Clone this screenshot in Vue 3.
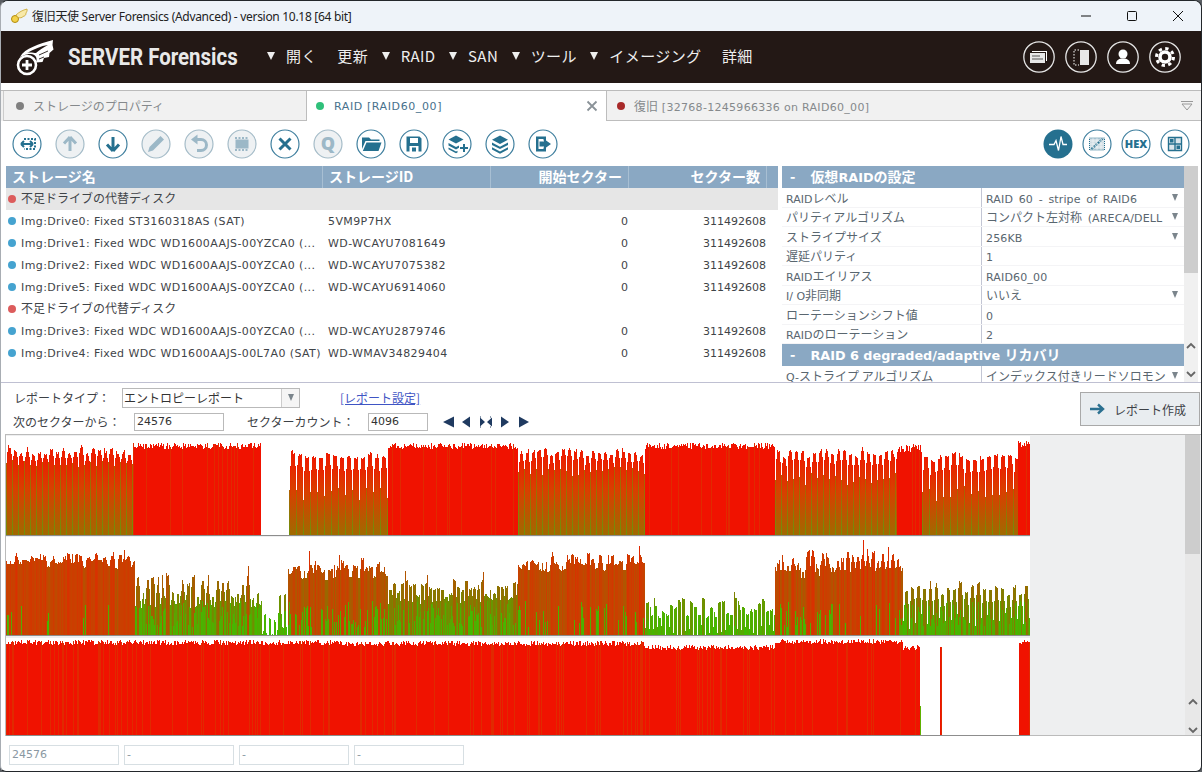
<script setup>
const menu = [
  { label: "開く", arrow: true },
  { label: "更新" },
  { label: "RAID", arrow: true },
  { label: "SAN", arrow: true },
  { label: "ツール", arrow: true },
  { label: "イメージング", arrow: true },
  { label: "詳細" },
];

const drives = [
  { group: true, shade: true, name: "不足ドライブの代替ディスク" },
  { name: "Img:Drive0: Fixed ST3160318AS (SAT)", id: "5VM9P7HX" },
  { name: "Img:Drive1: Fixed WDC WD1600AAJS-00YZCA0 (...", id: "WD-WCAYU7081649" },
  { name: "Img:Drive2: Fixed WDC WD1600AAJS-00YZCA0 (...", id: "WD-WCAYU7075382" },
  { name: "Img:Drive5: Fixed WDC WD1600AAJS-00YZCA0 (...", id: "WD-WCAYU6914060" },
  { group: true, name: "不足ドライブの代替ディスク" },
  { name: "Img:Drive3: Fixed WDC WD1600AAJS-00YZCA0 (...", id: "WD-WCAYU2879746" },
  { name: "Img:Drive4: Fixed WDC WD1600AAJS-00L7A0 (SAT)", id: "WD-WMAV34829404" },
];

const raidProps = [
  { k: "RAIDレベル", v: "RAID 60 - stripe of RAID6", pick: true },
  { k: "パリティアルゴリズム", v: "コンパクト左対称 (ARECA/DELL", pick: true },
  { k: "ストライプサイズ", v: "256KB", pick: true },
  { k: "遅延パリティ", v: "1" },
  { k: "RAIDエイリアス", v: "RAID60_00" },
  { k: "I/ O非同期", v: "いいえ", pick: true },
  { k: "ローテーションシフト値", v: "0" },
  { k: "RAIDのローテーション", v: "2" },
];

// the app sets latin at 11px and kana/kanji at 12px, so strings get split in runs
function runs(s) {
  return s
    .split(/([\x20-\x7e]+)/)
    .filter(Boolean)
    .map((t) => ({ t, latin: /^[\x20-\x7e]/.test(t) }));
}

// toolbar icons: fill = solid shapes, line = stroked shapes
const leftTools = [
  { line: "M9 15h11M9 15l3-3M9 15l3 3M21 15l-3-3M21 15l-3 3", dash: "M12 10h11v10H12", thin: true },
  { off: true, line: "M15 8l6 6.5M15 8l-6 6.5M15 8v14" },
  { line: "M15 22l6-6.5M15 22l-6-6.5M15 22V8" },
  { off: true, fill: "M19.5 7l3.5 3.5L12 21.5l-5 1.5 1.500-5z" },
  { off: true, line: "M12 10.500h5a5.500 5.500 0 0 1 0 11h-4", fill: "M7 10.500l6.500-5v10z" },
  { off: true, fill: "M8.500 10.500h13v9h-13z", dash: "M8 9h14M8 21h14" },
  { line: "M9.500 9.500l11 11M20.500 9.500l-11 11" },
  { off: true, text: "Q", size: 18 },
  { fill: "M6 8.500h7l2 2h8.500V12H9.500L6 20zM10.500 13.500H25.500L22.500 22H6.800z" },
  { fill: "M7.500 7.500h13l2 2v13h-15zM11 9v5h8V9zM10.500 17v5.500h9V17zM13 18.500h4v4h-4z", evenodd: true },
  { fill: "M14 6.500l7.500 4-7.500 4-7.500-4zM6.500 14l7.500 4 3-1.600v2.300L14 20.500l-7.500-4zM6.500 18.500l7.500 4 1.500-.8v1.800l-1.500.8-7.500-4zM21 15h2v3h3v2h-3v3h-2v-3h-3v-2h3z" },
  { fill: "M15 6.500l8 4.200-8 4.200-8-4.200zM7 13.500l8 4.200 8-4.200v2.400l-8 4.200-8-4.200zM7 18.200l8 4.200 8-4.200v2.400l-8 4.200-8-4.200z" },
  { fill: "M8 7.500h10v4h-2.500V10H10.500v10h5v-1.500H18v4H8zM16 12.500v-2.500l7 5-7 5v-2.500h-4.500v-5z" },
];

// scratch generator so the charts look the same on every load
let seed = 7741;
function rnd() {
  seed = (seed * 16807) % 2147483647;
  return seed / 2147483647;
}

function mix(a, b, t) {
  const c = a.map((v, i) => Math.round(v + (b[i] - v) * t));
  return `rgb(${c[0]},${c[1]},${c[2]})`;
}

function heatColor(ratio) {
  const stops = [
    [0.08, [55, 195, 0]],
    [0.28, [85, 170, 0]],
    [0.45, [135, 120, 0]],
    [0.7, [195, 70, 0]],
    [1, [235, 30, 0]],
  ];
  for (let i = 1; i < stops.length; i++) {
    if (ratio <= stops[i][0]) {
      const t = Math.max(0, (ratio - stops[i - 1][0]) / (stops[i][0] - stops[i - 1][0]));
      return mix(stops[i - 1][1], stops[i][1], t);
    }
  }
  return "rgb(235,30,0)";
}

// each segment: from, to, top, jitter, mode, period, valley depth
function buildLane(offset, segs) {
  const bars = [];
  for (const [from, to, top, jit, mode, period, valley] of segs) {
    let peak = top;
    for (let x = from; x < to; x++) {
      const phase = period ? (x - from) % period : 1;
      if (period && phase === 0) peak = top + rnd() * jit;
      let y = period ? peak + rnd() * 2.5 : top + rnd() * jit;
      if (period && rnd() < 0.1) y -= rnd() * jit * 0.6;
      if (period && phase === 0) y = top + valley * (0.65 + rnd() * 0.35);
      else if (period && period > 4 && (phase === 1 || phase === period - 1)) y += valley * 0.25;
      const h = Math.max(0, 99 - y);
      let fill;
      if (mode === "red") fill = rnd() < 0.12 ? "#e02a00" : "#f01200";
      else if (mode === "fade") fill = phase === 0 ? "url(#fadeLow)" : "url(#fadeHigh)";
      else fill = heatColor((h / 100) * (0.92 + rnd() * 0.16));
      bars.push({ x: x - 6, y: offset + y, h, fill });
      // low entropy sectors leave a green foot under the weaker columns
      if (mode === "heat" && h < 72 && rnd() < 0.5) {
        const foot = Math.min(h, 8 + rnd() * 26);
        bars.push({ x: x - 6, y: offset + 99 - foot, h: foot, fill: heatColor(0.16 + rnd() * 0.14) });
      }
    }
  }
  return bars;
}

const bars = [
  ...buildLane(0, [
    [6, 133, 10, 8, "fade", 6, 22],
    [133, 261, 7, 6, "red"],
    [289, 388, 16, 6, "fade", 7, 50],
    [388, 518, 7, 6, "red"],
    [518, 645, 11, 8, "fade", 6, 30],
    [645, 775, 7, 6, "red"],
    [775, 897, 13, 8, "fade", 6, 36],
    [897, 922, 8, 8, "red"],
    [922, 1018, 16, 8, "fade", 7, 50],
    [1018, 1030, 5, 6, "red"],
  ]),
  ...buildLane(100, [
    [6, 135, 16, 16, "heat", 4, 10],
    [135, 262, 38, 24, "heat", 5, 34],
    [262, 288, 45, 40, "heat", 5, 70],
    [288, 388, 20, 24, "heat", 4, 16],
    [388, 518, 42, 20, "heat", 4, 26],
    [518, 645, 16, 18, "heat", 4, 14],
    [645, 775, 60, 20, "heat", 4, 44],
    [775, 903, 12, 22, "heat", 5, 24],
    [903, 1030, 44, 14, "heat", 6, 50],
  ]),
  ...buildLane(200, [
    [6, 345, 4, 5, "red"],
    [345, 645, 5, 5, "red"],
    [645, 775, 9, 5, "red"],
    [775, 903, 3, 5, "red"],
    [903, 920, 7, 4, "red", 6, 8],
    [940, 942, 11, 2, "red"],
    [1019, 1030, 4, 4, "red"],
  ]),
  { x: 914, y: 270, h: 29, fill: "#5fb000" },
];
</script>

<template>
  <div class="window">
    <div class="titlebar">
      <svg class="app-icon" width="18" height="16" viewBox="0 0 18 16">
        <circle cx="5" cy="11" r="3.500" fill="#f3d24a" stroke="#b08a10" stroke-width="1" />
        <path d="M6 7C9 4 13 2 17 1c.5 2-.5 3-1 4 0 2-1 3-3 3.500-1 1.500-3 1.500-5 1z" fill="#f8e9a8" stroke="#c9a52a" stroke-width=".8" />
      </svg>
      <span class="title">復旧天使 Server Forensics (Advanced) - version 10.18 [64 bit]</span>
      <div class="win-buttons">
        <svg width="12" height="12" viewBox="0 0 12 12"><path d="M1 6h10" stroke="#111" stroke-width="1" /></svg>
        <svg width="12" height="12" viewBox="0 0 12 12"><rect x="1.500" y="1.500" width="9" height="9" rx="1" fill="none" stroke="#111" /></svg>
        <svg width="12" height="12" viewBox="0 0 12 12"><path d="M1 1l10 10M11 1L1 11" stroke="#111" /></svg>
      </div>
    </div>

    <header class="brandbar">
      <svg class="logo" width="42" height="40" viewBox="0 0 42 40">
        <circle cx="12" cy="28" r="9" fill="none" stroke="#fff" stroke-width="2.600" />
        <path d="M12 23v10M7 28h10" stroke="#fff" stroke-width="2.800" />
        <path d="M5 20C10 11 24 7 38 3l-.5 5 1 4.500-4 3.500-.5 4-5 1-1.500 4-6.500 .5c2-5-1-8-5-8.500-3 0-6 .5-8.500 2z" fill="#fff" />
        <path d="M12 16c7-4 14-7 21-8-5 3-9 5-12 8-2 0-6-1-9 0z" fill="#231815" />
        <path d="M24 18l9-4M24 22l5-2" stroke="#231815" stroke-width=".9" fill="none" />
      </svg>
      <span class="brand"><span class="brand-text">SERVER Forensics</span></span>
      <nav class="menu">
        <span v-for="item in menu" :key="item.label" class="menu-item" :class="{ plain: !item.arrow }">
          <i v-if="item.arrow" class="menu-arrow"></i>{{ item.label }}
        </span>
      </nav>
      <div class="head-icons">
        <svg width="32" height="32" viewBox="0 0 32 32">
          <circle cx="16" cy="16" r="15.200" class="ring" />
          <path d="M9 10h15v10h-1V11H9z" fill="#fff" />
          <path d="M7 12h15v10H7z" fill="#e8e8e8" />
          <path d="M9 15h8M9 18h11" stroke="#555" stroke-width="1.200" />
        </svg>
        <svg width="32" height="32" viewBox="0 0 32 32">
          <circle cx="16" cy="16" r="15.200" class="ring" />
          <path d="M15 9h9v15h-9z" fill="#e8e8e8" />
          <path d="M14 9H9v15h5" fill="none" stroke="#fff" stroke-dasharray="1.500 1.500" />
        </svg>
        <svg width="32" height="32" viewBox="0 0 32 32">
          <circle cx="16" cy="16" r="15.200" class="ring" />
          <circle cx="16" cy="13" r="4.500" fill="#fff" />
          <path d="M9 23c0-4 3-5 5-5.500h4c2 .5 5 1.500 5 5.500z" fill="#fff" />
        </svg>
        <svg width="32" height="32" viewBox="0 0 32 32">
          <circle cx="16" cy="16" r="15.200" class="ring" />
          <circle cx="16" cy="16" r="8.500" fill="none" stroke="#fff" stroke-width="3" stroke-dasharray="3.300 3.370" />
          <circle cx="16" cy="16" r="5" fill="none" stroke="#fff" stroke-width="3.600" />
        </svg>
      </div>
    </header>

    <div class="tabs">
      <div class="tab tab-first"><i class="dot grey"></i>ストレージのプロパティ</div>
      <div class="tab tab-active">
        <i class="dot green"></i><span class="latin">RAID [RAID60_00]</span>
        <svg class="tab-close" width="12" height="12" viewBox="0 0 12 12"><path d="M1.500 1.500l9 9M10.500 1.500l-9 9" stroke="#8a9298" stroke-width="1.800" /></svg>
      </div>
      <div class="tab tab-last">
        <i class="dot maroon"></i><span>復旧<span class="latin"> [32768-1245966336 on RAID60_00]</span></span>
        <svg class="tab-menu" width="12" height="10" viewBox="0 0 12 10"><path d="M0 .5h12" stroke="#999" /><path d="M1 3h10L6 9z" fill="none" stroke="#999" /></svg>
      </div>
    </div>

    <div class="toolbar">
      <div class="tool-group">
        <svg v-for="(t, i) in leftTools" :key="i" class="tool" :class="{ off: t.off }" width="30" height="30" viewBox="0 0 30 30">
          <circle cx="15" cy="15" r="14" class="tool-ring" />
          <path v-if="t.fill" :d="t.fill" class="tool-fill" :fill-rule="t.evenodd ? 'evenodd' : 'nonzero'" />
          <path v-if="t.line" :d="t.line" class="tool-line" :class="{ thin: t.thin }" />
          <path v-if="t.dash" :d="t.dash" class="tool-dash" />
          <text v-if="t.text" x="15" y="21" text-anchor="middle" class="tool-text" :font-size="t.size">{{ t.text }}</text>
        </svg>
      </div>
      <div class="tool-group right">
        <svg class="tool" width="30" height="30" viewBox="0 0 30 30">
          <circle cx="15" cy="15" r="14.500" fill="#25708f" />
          <path d="M6 15.500h5l2-4 2.500 10 2.500-14 2 8h4" fill="none" stroke="#fff" stroke-width="1.300" />
        </svg>
        <svg class="tool" width="30" height="30" viewBox="0 0 30 30">
          <circle cx="15" cy="15" r="14" class="tool-ring" />
          <path d="M7.500 9h15v12h-15z" fill="#cfdde4" stroke="#25708f" stroke-dasharray="1 1" />
          <path d="M9.500 20l11-10" fill="none" stroke="#25708f" stroke-width="2.400" stroke-dasharray="2 .8" />
          <path d="M8 12h14M8 15h14M8 18h14M11 9v12M15 9v12M19 9v12" stroke="#fff" stroke-width=".5" />
        </svg>
        <svg class="tool" width="30" height="30" viewBox="0 0 30 30">
          <circle cx="15" cy="15" r="14" class="tool-ring" />
          <text x="15" y="19" text-anchor="middle" class="tool-text" font-size="11">HEX</text>
        </svg>
        <svg class="tool" width="30" height="30" viewBox="0 0 30 30">
          <circle cx="15" cy="15" r="14" class="tool-ring" />
          <path d="M8.500 8.500h13v13h-13zM15 8.500v13M8.500 15h13" fill="#dce6eb" stroke="#25708f" stroke-width="1.400" />
          <path d="M10 10h3.500v3.500H10zM16.500 16.500H20V20h-3.500z" fill="#25708f" />
        </svg>
      </div>
    </div>

    <section class="upper">
      <div class="drives">
        <div class="row head">
          <span>ストレージ名</span>
          <span>ストレージID</span>
          <span class="num">開始セクター</span>
          <span class="num">セクター数</span>
        </div>
        <div v-for="(d, i) in drives" :key="i" class="row" :class="{ shade: d.shade }">
          <span class="name"><i class="dot small" :class="d.group ? 'coral' : 'sky'"></i><span :class="d.group ? 'group-name' : 'latin wide-text'">{{ d.name }}</span></span>
          <template v-if="!d.group">
            <span class="latin wide-text">{{ d.id }}</span>
            <span class="num latin">0</span>
            <span class="num latin">311492608</span>
          </template>
        </div>
      </div>

      <div class="props">
        <div class="props-body">
          <div class="prop-title"><b class="minus">-</b>仮想<span class="latin">RAID</span>の設定</div>
          <div v-for="p in raidProps" :key="p.k" class="prop">
            <span class="prop-key"><span><span v-for="(r, i) in runs(p.k)" :key="i" :class="{ latin: r.latin }">{{ r.t }}</span></span></span>
            <span class="prop-val"><span><span v-for="(r, i) in runs(p.v)" :key="i" :class="{ latin: r.latin }">{{ r.t }}</span></span><i v-if="p.pick" class="caret"></i></span>
          </div>
          <div class="prop-title"><b class="minus">-</b><span class="latin">RAID 6 degraded/adaptive </span>リカバリ</div>
          <div class="prop last">
            <span class="prop-key"><span><span class="latin">Q-</span>ストライプ アルゴリズム</span></span>
            <span class="prop-val"><span>インデックス付きリードソロモン</span><i class="caret"></i></span>
          </div>
        </div>
        <div class="scroll">
          <div class="thumb"></div>
          <svg class="chev" width="10" height="8" viewBox="0 0 10 8"><path d="M1 6l4-4 4 4" fill="none" stroke="#666" stroke-width="1.800" /></svg>
          <svg class="chev" width="10" height="8" viewBox="0 0 10 8"><path d="M1 2l4 4 4-4" fill="none" stroke="#666" stroke-width="1.800" /></svg>
        </div>
      </div>
    </section>

    <section class="report">
      <div class="report-form">
        <div class="form-row">
          <span class="type-label">レポートタイプ：</span>
          <div class="select">
            <span>エントロピーレポート</span>
            <div class="select-btn"><i class="caret"></i></div>
          </div>
          <a class="link">[レポート設定]</a>
        </div>
        <div class="form-row">
          <span class="from-label">次のセクターから：</span>
          <div class="field wide latin">24576</div>
          <span class="count-label">セクターカウント：</span>
          <div class="field narrow latin">4096</div>
          <svg class="nav" width="88" height="12" viewBox="0 0 88 12">
            <path d="M1 6l11-5.500v11zM20 6l8-5.500v11zM59 .5l8 5.500-8 5.500zM77 .5l10 5.500-10 5.500z" fill="#1f3a60" />
            <path d="M38 1.500l5 4.500-5 4.500zM50 1.500l-5 4.500 5 4.500z" fill="#1f3a60" />
            <path d="M38 1h2M38 11h2M48 1h2M48 11h2" stroke="#1f3a60" stroke-dasharray="1 1" />
          </svg>
        </div>
      </div>
      <button class="make">
        <svg width="16" height="12" viewBox="0 0 16 12"><path d="M1 6h12M9 1.500L14 6l-5 4.500" fill="none" stroke="#2b7090" stroke-width="2.400" /></svg>
        レポート作成
      </button>
    </section>

    <section class="chart">
      <svg class="plot" width="1024" height="300" viewBox="0 0 1024 300" shape-rendering="crispEdges">
        <defs>
          <linearGradient id="fadeHigh" x1="0" y1="0" x2="0" y2="1">
            <stop offset="0" stop-color="#ee1a00" />
            <stop offset=".45" stop-color="#d84000" />
            <stop offset="1" stop-color="#a06a00" />
          </linearGradient>
          <linearGradient id="fadeLow" x1="0" y1="0" x2="0" y2="1">
            <stop offset="0" stop-color="#b06000" />
            <stop offset="1" stop-color="#70900a" />
          </linearGradient>
        </defs>
        <rect width="1024" height="99" fill="#fff" />
        <rect y="101" width="1024" height="98" fill="#fff" />
        <rect y="202" width="1024" height="97" fill="#fff" />
        <rect v-for="(b, i) in bars" :key="i" :x="b.x" :y="b.y" width="1" :height="b.h" :fill="b.fill" />
        <rect y="99" width="1024" height="1" fill="#8d8d8d" />
        <rect y="199" width="1024" height="1" fill="#8d8d8d" />
        <rect y="299" width="1024" height="1" fill="#8d8d8d" />
      </svg>
      <div class="chart-scroll">
        <div class="chart-thumb"></div>
        <svg class="chev" width="10" height="8" viewBox="0 0 10 8"><path d="M1 6l4-4 4 4" fill="none" stroke="#666" stroke-width="1.800" /></svg>
        <svg class="chev" width="10" height="8" viewBox="0 0 10 8"><path d="M1 2l4 4 4-4" fill="none" stroke="#666" stroke-width="1.800" /></svg>
      </div>
    </section>

    <footer class="status">
      <div class="status-box first latin">24576</div>
      <div class="status-box latin">-</div>
      <div class="status-box latin">-</div>
      <div class="status-box latin">-</div>
    </footer>
  </div>
</template>

<style scoped>
.window {
  width: 1202px;
  height: 772px;
  box-sizing: border-box;
  display: flex;
  flex-direction: column;
  overflow: hidden;
  background: #fff;
  border: 1px solid #23272b;
  border-left-color: #a8adb3;
  border-top-left-radius: 8px;
  border-top-right-radius: 8px;
  border-bottom-left-radius: 6px;
  border-bottom-right-radius: 6px;
  font-family: "Noto Sans CJK JP", "Noto Sans", sans-serif;
  font-size: 12px;
  color: #3c4146;
}
.latin {
  font-family: "DejaVu Sans", sans-serif;
  font-size: 11px;
  white-space: pre;
}
.wide-text {
  letter-spacing: 0.4px;
}

.titlebar {
  height: 30px;
  flex: none;
  display: flex;
  align-items: center;
  background: #eef3f9;
  padding-left: 9px;
}
.app-icon {
  margin-right: 4px;
}
.title {
  font-family: "Noto Sans", "Noto Sans CJK JP", sans-serif;
  font-size: 12px;
  letter-spacing: -0.3px;
  color: #222;
}
.win-buttons {
  margin-left: auto;
  display: flex;
  gap: 34px;
  padding-right: 17px;
}

.brandbar {
  height: 52px;
  flex: none;
  display: flex;
  align-items: center;
  background: #231815;
  color: #eee;
  padding-left: 14px;
}
.logo {
  margin-right: 11px;
}
.brand {
  width: 199px;
}
.brand-text {
  display: inline-block;
  font-family: Roboto, "Noto Sans", sans-serif;
  font-weight: 700;
  font-size: 23px;
  color: #e9e9e9;
  white-space: nowrap;
  transform: scaleX(0.89);
  transform-origin: left center;
}
.menu {
  display: flex;
  gap: 13.500px;
  font-size: 15px;
  letter-spacing: 0.4px;
  padding-bottom: 3px;
}
.menu-item {
  display: flex;
  align-items: center;
  white-space: nowrap;
}
.menu-item.plain {
  margin-left: 7px;
}
.menu-arrow {
  width: 0;
  height: 0;
  border-left: 4px solid transparent;
  border-right: 4px solid transparent;
  border-top: 8px solid #eee;
  margin-right: 11px;
}
.head-icons {
  margin-left: auto;
  display: flex;
  gap: 10px;
  padding-right: 20px;
}
.ring {
  fill: none;
  stroke: #e6e6e6;
  stroke-width: 1.300;
}

.tabs {
  height: 31px;
  flex: none;
  margin-top: 7px;
  display: flex;
  background: #f1f1f1;
  border-top: 1px solid #bbb;
  box-sizing: border-box;
  padding-left: 2px;
  font-size: 12px;
}
.tab {
  display: flex;
  align-items: center;
  box-sizing: border-box;
  padding-left: 11px;
  color: #85898c;
  border-bottom: 1px solid #bdbdbd;
}
.tab-first {
  width: 304px;
  padding-left: 12px;
  border-left: 1px solid #ccc;
  border-right: 1px solid #bdbdbd;
}
.tab-active {
  width: 299px;
  background: #fff;
  color: #47718c;
  border-bottom: none;
  padding-left: 9px;
}
.tab-active .latin {
  letter-spacing: 0.6px;
  margin-left: 1px;
}
.tab-last {
  flex: 1;
  border-left: 1px solid #bdbdbd;
  padding-left: 10px;
}
.tab-last .latin {
  letter-spacing: 0.3px;
}
.tab-close {
  margin-left: auto;
  margin-right: 8px;
}
.tab-menu {
  margin-left: auto;
  margin-right: 8px;
}
.dot {
  display: inline-block;
  width: 8px;
  height: 8px;
  border-radius: 50%;
  margin-right: 9px;
  flex: none;
}
.dot.small {
  margin-right: 5px;
  margin-left: 2px;
}
.grey { background: #808080; }
.green { background: #2fc07a; }
.maroon { background: #a82a2a; }
.coral { background: #dc5c5c; }
.sky { background: #45a3d0; }

.toolbar {
  height: 45px;
  flex: none;
  display: flex;
  justify-content: space-between;
  align-items: center;
  padding: 0 11px;
  box-sizing: border-box;
}
.tool-group {
  display: flex;
  gap: 13px;
}
.tool-group.right {
  gap: 9px;
}
.tool-ring {
  fill: #fff;
  stroke: #3f7f9e;
  stroke-width: 1.200;
}
.tool-fill {
  fill: #25708f;
}
.tool-line {
  fill: none;
  stroke: #25708f;
  stroke-width: 3;
}
.tool-line.thin {
  stroke-width: 2;
}
.tool-dash {
  fill: none;
  stroke: #25708f;
  stroke-width: 2;
  stroke-dasharray: 2 1.500;
}
.tool-text {
  font-family: "Noto Sans", sans-serif;
  font-weight: 900;
  fill: #25708f;
}
.off .tool-ring {
  fill: #eef1f3;
  stroke: #a5bcc8;
}
.off .tool-fill,
.off .tool-text {
  fill: #9cb8c7;
}
.off .tool-line,
.off .tool-dash {
  stroke: #9cb8c7;
}

.upper {
  height: 217px;
  flex: none;
  display: flex;
  padding-left: 5px;
  border-bottom: 1px solid #bfc0d2;
  box-sizing: border-box;
}
.drives {
  width: 772px;
  flex: none;
}
.row {
  display: grid;
  grid-template-columns: 317px 168px 138px 138px 11px;
  height: 22px;
  align-items: center;
  color: #3f4448;
  white-space: nowrap;
}
.row > span {
  padding-left: 5px;
}
.row.shade {
  background: #e6e6e6;
}
.row .name {
  padding-left: 0;
  display: flex;
  align-items: center;
}
.group-name {
  padding-bottom: 3px;
}
.row .num {
  text-align: right;
  padding-right: 1px;
}
.row.head {
  background: #8aa8c3;
  color: #fff;
  font-size: 14px;
  font-weight: 700;
}
.row.head > span {
  padding-left: 6px;
  height: 22px;
  line-height: 21px;
  border-right: 1px solid #a8bfd3;
  box-sizing: border-box;
}
.row.head .num {
  padding-right: 6px;
}

.props {
  flex: 1;
  margin-left: 4px;
  display: flex;
  min-width: 0;
}
.props-body {
  width: 402px;
  flex: none;
  overflow: hidden;
}
.prop-title {
  height: 22px;
  line-height: 21px;
  background: #8aa8c3;
  color: #fff;
  font-size: 14px;
  font-weight: 700;
  white-space: nowrap;
}
.prop-title .latin {
  font-size: 12.800px;
  font-weight: 700;
}
.minus {
  display: inline-block;
  margin: 0 15px 0 8px;
}
.prop {
  display: grid;
  grid-template-columns: 200px 1fr;
  height: 19.500px;
  align-items: center;
  color: #59666f;
  border-bottom: 1px solid #f4f4f6;
  box-sizing: border-box;
  white-space: nowrap;
}
.prop.last {
  height: 16px;
  border-bottom: none;
  align-items: start;
}
.prop-key {
  padding-left: 4px;
  height: 100%;
  display: flex;
  align-items: center;
  border-right: 1px solid #c3c6d4;
}
.prop-val {
  padding-left: 4px;
  display: flex;
  align-items: center;
}
.prop-val .latin {
  letter-spacing: 0.15px;
  word-spacing: 2px;
}
.prop.last .prop-key,
.prop.last .prop-val {
  line-height: 19px;
  height: 16px;
  align-items: flex-start;
}
.caret {
  width: 0;
  height: 0;
  border-left: 3.500px solid transparent;
  border-right: 3.500px solid transparent;
  border-top: 7px solid #7b858c;
}
.prop-val .caret {
  margin-left: auto;
  margin-right: 6px;
}
.prop.last .caret {
  margin-top: 6px;
}
.scroll {
  flex: 1;
  background: #f0f0f0;
  margin-right: 3px;
  position: relative;
  display: flex;
  flex-direction: column;
  align-items: center;
}
.thumb {
  width: 100%;
  height: 107px;
  flex: none;
  background: #cdcdcd;
  margin-bottom: 69px;
}
.chev {
  flex: none;
}
.scroll .chev + .chev,
.chart-scroll .chev + .chev {
  margin-top: 20px;
}

.report {
  height: 51px;
  flex: none;
  display: flex;
  justify-content: space-between;
  padding: 4px 1px 0 11px;
  box-sizing: border-box;
}
.report-form {
  display: flex;
  flex-direction: column;
  gap: 3px;
}
.form-row {
  display: flex;
  align-items: center;
  height: 21px;
}
.type-label {
  width: 110px;
  padding-left: 2px;
  box-sizing: border-box;
}
.select {
  width: 178px;
  height: 20px;
  box-sizing: border-box;
  border: 1px solid #b9b9b9;
  display: flex;
  align-items: center;
  padding-left: 1px;
  color: #333;
}
.select-btn {
  margin-left: auto;
  width: 17px;
  height: 100%;
  border-left: 1px solid #ccc;
  background: #f5f5f5;
  display: flex;
  align-items: center;
  justify-content: center;
}
.link {
  margin-left: 40px;
  color: #3f55c4;
  text-decoration: underline;
}
.from-label {
  width: 122px;
  padding-left: 1px;
  box-sizing: border-box;
}
.field {
  height: 18px;
  box-sizing: border-box;
  border: 1px solid #b9b9b9;
  line-height: 15px;
  padding-left: 2px;
  color: #333;
}
.field.wide {
  width: 90px;
}
.field.narrow {
  width: 60px;
}
.count-label {
  margin-left: 23px;
  width: 121px;
}
.nav {
  margin-left: 14px;
}
.make {
  width: 120px;
  height: 34px;
  margin-top: 5px;
  display: flex;
  align-items: center;
  gap: 9px;
  padding: 0 0 0 8px;
  background: #e9edf0;
  border: 1px solid #a9a9a9;
  font: inherit;
  color: #3c4146;
}

.chart {
  height: 302px;
  flex: none;
  display: flex;
  margin-left: 4px;
  padding-top: 1px;
  box-sizing: border-box;
  background: #eeeff0;
  border-left: 1px solid #bbb;
  border-top: 1px solid #bbb;
  border-bottom: 1px solid #bbb;
}
.plot {
  flex: none;
  display: block;
}
.chart-scroll {
  margin-left: auto;
  margin-right: 1px;
  width: 15px;
  margin-top: -1px;
  background: #e8e8e8;
  display: flex;
  flex-direction: column;
  align-items: center;
}
.chart-thumb {
  width: 100%;
  height: 119px;
  flex: none;
  background: #cdcdcd;
  margin-bottom: 144px;
}

.status {
  flex: 1;
  display: flex;
  gap: 5px;
  padding: 9px 0 0 8px;
}
.status-box {
  width: 110px;
  height: 20px;
  box-sizing: border-box;
  border: 1px solid #d7dfe3;
  line-height: 18px;
  padding-left: 2px;
  color: #8a98a2;
}
</style>

<style>
html,
body {
  margin: 0;
  background: #5a5e63;
}
</style>
